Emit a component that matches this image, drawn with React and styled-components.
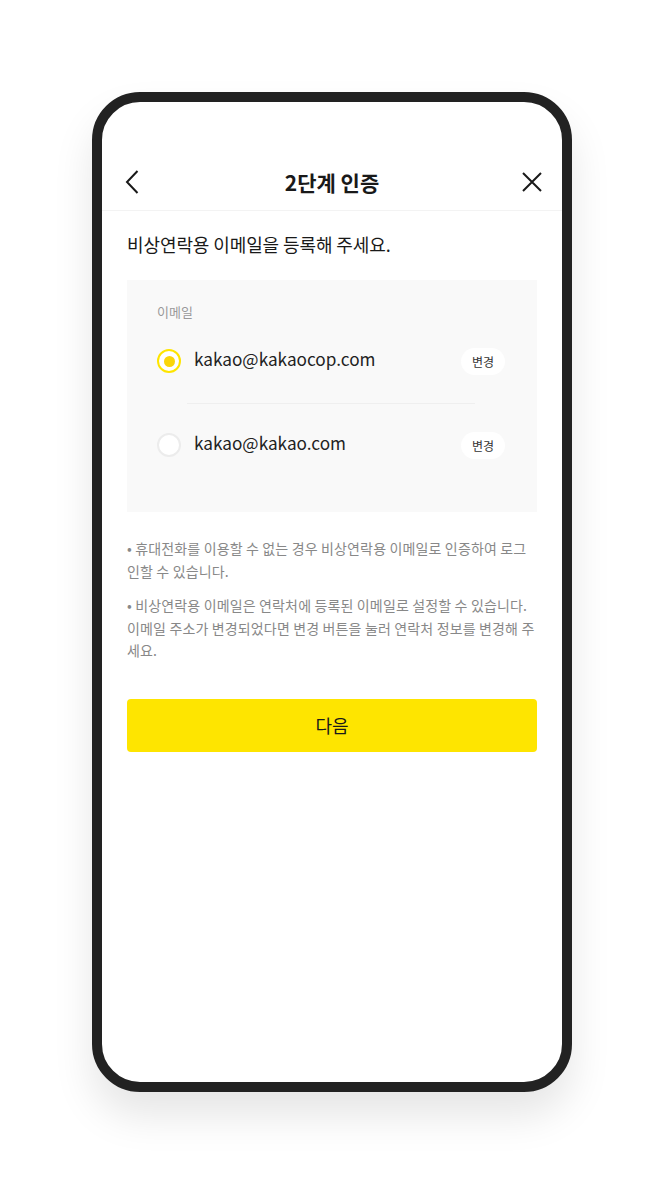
import React, { useState } from "react"
import styled, { createGlobalStyle } from "styled-components"

const GlobalStyle = createGlobalStyle`
  body {
    margin: 0;
    background: #fff;
    font-family: "Noto Sans CJK KR", "Noto Sans", sans-serif;
    color: #191919;
  }
`

const Page = styled.div`
  display: flex;
  justify-content: center;
  padding: 92px 0;
`

const Phone = styled.div`
  box-sizing: border-box;
  width: 480px;
  height: 1000px;
  border: 10px solid #222;
  border-radius: 48px;
  background: #fff;
  box-shadow: 0 24px 40px rgba(0, 0, 0, 0.1);
  overflow: hidden;
  display: flex;
  flex-direction: column;
  padding-top: 52px;
`

const Header = styled.header`
  height: 56px;
  display: flex;
  align-items: center;
  justify-content: space-between;
  padding: 0 18px;
  border-bottom: 1px solid #f3f3f3;
`

const IconButton = styled.button`
  width: 24px;
  height: 24px;
  padding: 0;
  border: 0;
  background: none;
  display: flex;
  align-items: center;
  justify-content: center;
  color: #191919;
`

const Title = styled.h1`
  margin: 0;
  font-size: 21px;
  font-weight: 700;
`

const Content = styled.main`
  padding: 20px 25px 0;
`

const Heading = styled.h2`
  margin: 0;
  font-size: 18px;
  line-height: 26px;
  font-weight: 400;
  letter-spacing: -0.1px;
`

const EmailBox = styled.section`
  margin-top: 23px;
  background: #f9f9f9;
  padding: 23px 32px 43px 30px;
`

const Label = styled.div`
  font-size: 13px;
  line-height: 18px;
  color: #999;
`

const List = styled.div`
  margin-top: 16px;
`

const Row = styled.label`
  height: 48px;
  display: flex;
  align-items: center;
  cursor: pointer;
`

const Radio = styled.span`
  width: 24px;
  height: 24px;
  box-sizing: border-box;
  border-radius: 50%;
  border: 2.5px solid ${(p) => (p.checked ? "#fee500" : "#ececec")};
  background: #fff;
  display: flex;
  align-items: center;
  justify-content: center;
  flex-shrink: 0;

  &::after {
    content: "";
    width: 11px;
    height: 11px;
    border-radius: 50%;
    background: ${(p) => (p.checked ? "#fad60a" : "transparent")};
  }
`

const Address = styled.span`
  flex: 1;
  margin-left: 13px;
  font-size: 17.2px;
  line-height: 24px;
  color: #222;
  transform: translateY(-2px);
`

const ChangeButton = styled.button`
  height: 27px;
  padding: 0 11px;
  border: 0;
  border-radius: 14px;
  background: #fff;
  font-family: inherit;
  font-size: 12px;
  color: #333;
`

const Divider = styled.hr`
  margin: 18px 30px 17px;
  border: 0;
  border-top: 1px solid #efefef;
`

const Notes = styled.div`
  margin-top: 25px;
  display: flex;
  flex-direction: column;
  gap: 12px;
`

const Note = styled.p`
  margin: 0;
  font-size: 14px;
  line-height: 22.5px;
  color: #888;
  letter-spacing: 0.15px;
`

const NextButton = styled.button`
  margin-top: 37px;
  width: 100%;
  height: 53px;
  border: 0;
  border-radius: 4px;
  background: #fee500;
  font-family: inherit;
  font-size: 18px;
  color: #191919;
`

const BackIcon = () => (
  <svg width="14" height="24" viewBox="0 0 14 24" fill="none">
    <path d="M12.5 1L2 12l10.5 11" stroke="currentColor" strokeWidth="2" />
  </svg>
)

const CloseIcon = () => (
  <svg width="22" height="22" viewBox="0 0 22 22" fill="none">
    <path d="M2 2l18 18M20 2L2 20" stroke="currentColor" strokeWidth="2" />
  </svg>
)

const emails = ["kakao@kakaocop.com", "kakao@kakao.com"]

export default function App() {
  const [selected, setSelected] = useState(0)

  return (
    <Page>
      <GlobalStyle />
      <Phone>
        <Header>
          <IconButton aria-label="뒤로">
            <BackIcon />
          </IconButton>
          <Title>2단계 인증</Title>
          <IconButton aria-label="닫기">
            <CloseIcon />
          </IconButton>
        </Header>
        <Content>
          <Heading>비상연락용 이메일을 등록해 주세요.</Heading>
          <EmailBox>
            <Label>이메일</Label>
            <List>
              {emails.map((email, i) => (
                <React.Fragment key={email}>
                  {i > 0 && <Divider />}
                  <Row onClick={() => setSelected(i)}>
                    <Radio checked={selected === i} />
                    <Address>{email}</Address>
                    <ChangeButton>변경</ChangeButton>
                  </Row>
                </React.Fragment>
              ))}
            </List>
          </EmailBox>
          <Notes>
            <Note>• 휴대전화를 이용할 수 없는 경우 비상연락용 이메일로 인증하여 로그인할 수 있습니다.</Note>
            <Note>
              • 비상연락용 이메일은 연락처에 등록된 이메일로 설정할 수 있습니다. 이메일 주소가 변경되었다면 변경 버튼을 눌러 연락처 정보를 변경해 주세요.
            </Note>
          </Notes>
          <NextButton>다음</NextButton>
        </Content>
      </Phone>
    </Page>
  )
}
